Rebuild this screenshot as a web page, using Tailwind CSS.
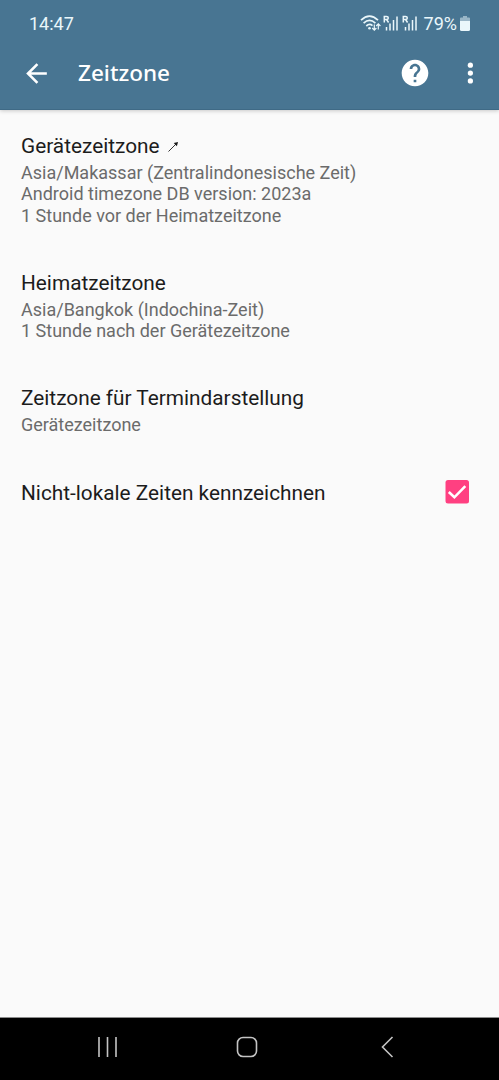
<!DOCTYPE html>
<html lang="de">
<head>
    <meta charset="UTF-8">
    <meta name="viewport" content="width=device-width, initial-scale=1.0">
    <title>Zeitzone</title>
    <script src="https://cdn.jsdelivr.net/npm/@tailwindcss/browser@4"></script>
</head>
<body class="flex flex-col h-screen overflow-hidden bg-[#fafafa] font-[Roboto,sans-serif]">

    <header class="h-[110px] shrink-0 bg-[#487592] border-b border-[#3f6a86] text-white shadow-[0_1px_4px_rgba(0,0,0,0.2)]">
        <!-- Status bar -->
        <div class="flex items-center justify-between h-[46px] pl-[29px] pr-[29px] text-[#eaf7fb]">
            <span class="text-[18px]">14:47</span>
            <div class="flex items-center">
                <svg class="w-[22px] h-[18px]" viewBox="0 0 22 18" fill="none" stroke="currentColor" stroke-width="1.7">
                    <path d="M1 6.2Q9.5 -1.8 18 6.2M3.6 9.2Q9.5 3.7 15.4 9.2M6.3 12Q9.5 9.1 12.5 11.6"/>
                    <circle cx="9.5" cy="14.3" r="1.3" fill="currentColor" stroke="none"/>
                    <path stroke-width="1.2" d="M14.3 10.5V16M12.2 14l2.1 2.1 2.1-2.1M18.3 15.5V10M16.2 12l2.1-2.1 2.1 2.1"/>
                </svg>
                <svg class="w-[19px] h-[16px] ml-[1px]" viewBox="0 0 19 16" fill="none" stroke="currentColor" stroke-width="1.5">
                    <path d="M1.3 7.5V1.5H3.5Q5.3 1.5 5.3 3T3.5 4.5H1.3M3.5 4.5L5.6 7.5"/>
                    <path d="M3.5 12V15.500M7 8.500V15.500M10.5 5V15.500M14 1.5V15.500"/>
                </svg>
                <svg class="w-[19px] h-[16px]" viewBox="0 0 19 16" fill="none" stroke="currentColor" stroke-width="1.5">
                    <path d="M1.3 7.5V1.5H3.5Q5.3 1.5 5.3 3T3.5 4.5H1.3M3.5 4.5L5.6 7.5"/>
                    <path d="M3.5 12V15.500M7 8.500V15.500M10.5 5V15.500M14 1.5V15.500"/>
                </svg>
                <span class="ml-[3px] text-[18px]">79%</span>
                <svg class="w-[10px] h-[15px] ml-[3px]" viewBox="0 0 10 15" fill="currentColor">
                    <path opacity="0.5" d="M3 0H7V1.5H9Q10 1.5 10 2.5V5H0V2.5Q0 1.5 1 1.5H3Z"/>
                    <path d="M0 5H10V13.5Q10 15 8.5 15H1.5Q0 15 0 13.5Z"/>
                </svg>
            </div>
        </div>
        <!-- App bar -->
        <div class="flex items-center h-[54px] pl-[21px] pr-[14px]">
            <svg class="size-[31px]" viewBox="0 0 24 24" fill="currentColor">
                <path d="M20 11H7.83l5.59-5.59L12 4l-8 8 8 8 1.41-1.41L7.83 13H20v-2z"/>
            </svg>
            <h1 class="ml-[26px] text-[22.5px] font-medium font-['Noto_Sans',sans-serif]">Zeitzone</h1>
            <svg class="size-[32px] ml-auto" viewBox="0 0 24 24" fill="currentColor">
                <path d="M12 2C6.48 2 2 6.48 2 12s4.48 10 10 10 10-4.48 10-10S17.52 2 12 2zm1 17h-2v-2h2v2zm2.07-7.75l-.9.92C13.45 12.9 13 13.5 13 15h-2v-.5c0-1.1.45-2.1 1.17-2.83l1.24-1.26c.37-.36.59-.86.59-1.41 0-1.1-.9-2-2-2s-2 .9-2 2H8c0-2.21 1.79-4 4-4s4 1.79 4 4c0 .88-.36 1.68-.93 2.25z"/>
            </svg>
            <svg class="size-[30px] ml-[24px]" viewBox="0 0 24 24" fill="currentColor">
                <circle cx="12.300" cy="5.7" r="2.1"/>
                <circle cx="12.300" cy="12" r="2.1"/>
                <circle cx="12.300" cy="18.3" r="2.1"/>
            </svg>
        </div>
    </header>

    <!-- Preferences -->
    <main class="flex flex-col grow gap-[44px] pt-[23px] px-[21px] text-[18px] leading-[21.25px] text-[#6b6b6b]">
        <section>
            <h2 class="flex items-center mb-[3px] text-[20.8px] leading-[26px] text-[#1c1c1c]">
                Gerätezeitzone
                <svg class="size-[10px] ml-[8px] mt-[2px]" viewBox="0 0 10 10" fill="none" stroke="currentColor" stroke-width="0.9">
                    <path d="M0.5 9.5L9 1"/>
                    <path fill="currentColor" stroke="none" d="M10 0L8.9 4.300L5.700 1.100Z"/>
                </svg>
            </h2>
            <p>Asia/Makassar (Zentralindonesische Zeit)</p>
            <p>Android timezone DB version: 2023a</p>
            <p>1 Stunde vor der Heimatzeitzone</p>
        </section>
        <section>
            <h2 class="mb-[3px] text-[20.8px] leading-[26px] text-[#1c1c1c]">Heimatzeitzone</h2>
            <p>Asia/Bangkok (Indochina-Zeit)</p>
            <p>1 Stunde nach der Gerätezeitzone</p>
        </section>
        <section>
            <h2 class="mb-[3px] text-[20.8px] leading-[26px] text-[#1c1c1c]">Zeitzone für Termindarstellung</h2>
            <p>Gerätezeitzone</p>
        </section>
        <section class="flex items-start justify-between pr-[9px]">
            <h2 class="text-[20.8px] leading-[26px] text-[#1c1c1c]">Nicht-lokale Zeiten kennzeichnen</h2>
            <svg class="size-[24px]" viewBox="0 0 24 24" fill="none">
                <rect x="0.500" width="23.500" height="23.500" rx="2.5" fill="#ff4081"/>
                <path d="M3.8 12L9.4 17.3L20.3 6.2" stroke="#fff" stroke-width="2.6"/>
            </svg>
        </section>
    </main>

    <!-- Navigation bar -->
    <nav class="flex items-center h-[63px] shrink-0 pl-[97px] pb-[4px] bg-black border-t border-[#8c8c8c] text-[#c4c4c4]">
        <svg class="w-[21px] h-[20px]" viewBox="0 0 21 20" fill="none" stroke="currentColor" stroke-width="1.6">
            <path d="M2 0V20M10.5 0V20M19 0V20"/>
        </svg>
        <svg class="w-[22px] h-[22px] ml-[118px]" viewBox="0 0 22 22" fill="none" stroke="currentColor" stroke-width="1.6">
            <rect x="1.5" y="1.5" width="19" height="19" rx="5.5"/>
        </svg>
        <svg class="w-[14px] h-[22px] ml-[122px]" viewBox="0 0 14 22" fill="none" stroke="currentColor" stroke-width="1.6">
            <path d="M12.5 1L2.5 11L12.5 21"/>
        </svg>
    </nav>

</body>
</html>
